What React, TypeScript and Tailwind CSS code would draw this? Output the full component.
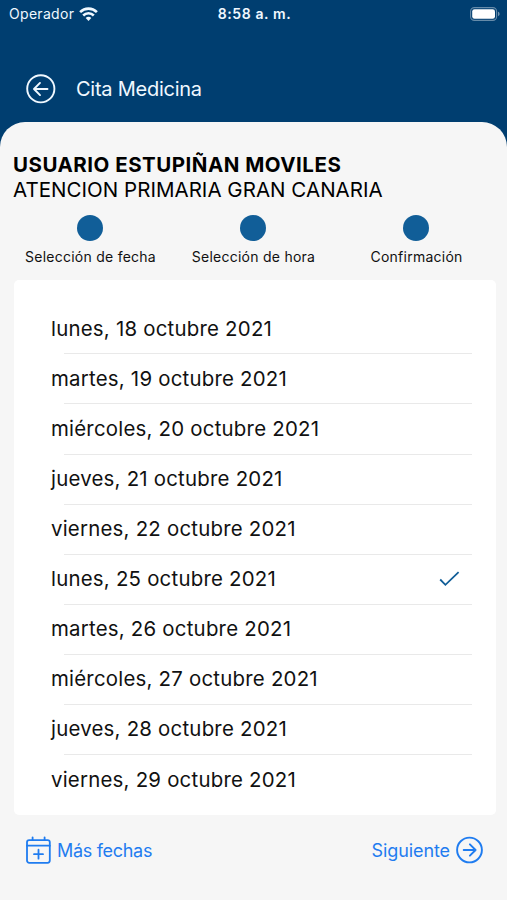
const steps = ['Selección de fecha', 'Selección de hora', 'Confirmación'];

const dates = [
  { label: 'lunes, 18 octubre 2021' },
  { label: 'martes, 19 octubre 2021' },
  { label: 'miércoles, 20 octubre 2021' },
  { label: 'jueves, 21 octubre 2021' },
  { label: 'viernes, 22 octubre 2021' },
  { label: 'lunes, 25 octubre 2021', selected: true },
  { label: 'martes, 26 octubre 2021' },
  { label: 'miércoles, 27 octubre 2021' },
  { label: 'jueves, 28 octubre 2021' },
  { label: 'viernes, 29 octubre 2021' },
];

function WifiIcon() {
  return (
    <svg width="19" height="14" viewBox="0 0 19 14" fill="none" stroke="currentColor" strokeWidth="2.6">
      <path d="M1.1 5.1a11.9 11.9 0 0 1 16.8 0" />
      <path d="M4.2 8.5a7.5 7.5 0 0 1 10.6 0" />
      <path d="M9.5 13.9 6.7 11a3.9 3.9 0 0 1 5.6 0Z" fill="currentColor" stroke="none" />
    </svg>
  );
}

function BatteryIcon() {
  return (
    <svg width="30" height="14" viewBox="0 0 30 14" fill="none">
      <rect x="0.6" y="0.6" width="26" height="12.8" rx="3.8" stroke="white" strokeOpacity="0.4" strokeWidth="1.1" />
      <rect x="2.2" y="2.2" width="22.8" height="9.6" rx="2.3" fill="white" />
      <path d="M28 4.8v4.4c1-.3 1.6-1.2 1.6-2.2S29 5.1 28 4.8Z" fill="white" fillOpacity="0.45" />
    </svg>
  );
}

function ArrowCircle({ back = false }: { back?: boolean }) {
  return back ? (
    <svg width="30" height="30" viewBox="0 0 30 30" fill="none" stroke="currentColor" strokeWidth="1.9" strokeLinecap="round" strokeLinejoin="round">
      <circle cx="14.8" cy="14.8" r="13.6" />
      <path d="M21.5 15h-13M14 8.900 8 15l6 6.100" />
    </svg>
  ) : (
    <svg width="28" height="28" viewBox="0 0 28 28" fill="none" stroke="currentColor" strokeWidth="1.9" strokeLinecap="round" strokeLinejoin="round">
      <circle cx="13.5" cy="14" r="12.4" />
      <path d="M7.7 14h11.9M13.9 8.3l5.7 5.7-5.700 5.700" />
    </svg>
  );
}

function CalendarPlusIcon() {
  return (
    <svg width="26" height="28" viewBox="0 0 26 28" fill="none" stroke="currentColor" strokeWidth="1.8" strokeLinecap="round" strokeLinejoin="round">
      <rect x="1" y="4.1" width="22.8" height="22.7" rx="2.2" />
      <path d="M1 9.7h22.8M6.6 1.3v2.8M18.6 1.3v2.8M12.500 13.700v9M8 18.200h9" />
    </svg>
  );
}

export default function App() {
  return (
    <main className="flex h-[900px] w-[507px] flex-col overflow-hidden bg-[#003e70] font-['Inter',sans-serif] text-[#111]">
      <header className="flex h-[122px] shrink-0 flex-col text-[#f0f8ff]">
        <div className="grid h-[27px] grid-cols-3 items-center pr-[7px] pl-[9px]">
          <div className="flex items-center gap-[5px]">
            <span className="text-[14px] tracking-[0.3px]">Operador</span>
            <WifiIcon />
          </div>
          <span className="text-center text-[14px] font-semibold tracking-[0.6px] whitespace-nowrap">8:58 a. m.</span>
          <div className="flex justify-end">
            <BatteryIcon />
          </div>
        </div>
        <div className="flex items-center gap-5 pt-[47px] pl-[26px]">
          <button type="button" aria-label="Volver">
            <ArrowCircle back />
          </button>
          <h1 className="text-[20px] leading-[29px] tracking-[-0.25px]">Cita Medicina</h1>
        </div>
      </header>

      <section className="flex grow flex-col rounded-t-[25px] bg-[#f6f6f6] pt-[30px]">
        <div className="pl-[13px] text-[20.5px] leading-[25px] whitespace-nowrap text-black">
          <p className="font-bold tracking-[0.5px]">USUARIO ESTUPIÑAN MOVILES</p>
          <p className="tracking-[0.03px]">ATENCION PRIMARIA GRAN CANARIA</p>
        </div>

        <ol className="mt-[13px] mr-[10px] ml-2 grid h-[65px] grid-cols-3">
          {steps.map((step) => (
            <li key={step} className="flex flex-col items-center">
              <span className="size-[26px] rounded-full bg-[#115e98]" />
              <span className="mt-[6px] pl-[2px] text-[14px] leading-5 tracking-[0.25px] whitespace-nowrap">{step}</span>
            </li>
          ))}
        </ol>

        <ul className="mr-[11px] ml-[14.400px] h-[535px] rounded-[5px] bg-white pt-[24.300px] pr-6 pl-[36.600px]">
          {dates.map((date, index) => (
            <li key={date.label} className="flex h-[50.1px] flex-col">
              <div className="flex grow items-center justify-between">
                <span className="text-[20.4px] tracking-[0.23px]">{date.label}</span>
                {date.selected && (
                  <svg className="mr-3 text-[#115e98]" width="21" height="16" viewBox="0 0 21 16" fill="none" stroke="currentColor" strokeWidth="1.8">
                    <path d="m1.2 8.5 5.2 5.3L19.6 1.2" />
                  </svg>
                )}
              </div>
              {index < dates.length - 1 && <div className="ml-[13px] h-px bg-[#e9e9e9]" />}
            </li>
          ))}
        </ul>

        <footer className="flex items-center justify-between pt-[21px] pr-[23px] pl-[26px] text-[18px] text-[#1f7cf0]">
          <button type="button" className="flex items-center gap-[5px]">
            <CalendarPlusIcon />
            <span className="pt-px leading-[27px] tracking-[-0.3px]">Más fechas</span>
          </button>
          <button type="button" className="flex items-center gap-[6px]">
            <span className="pt-px leading-[27px] tracking-[-0.1px]">Siguiente</span>
            <ArrowCircle />
          </button>
        </footer>
      </section>
    </main>
  );
}
